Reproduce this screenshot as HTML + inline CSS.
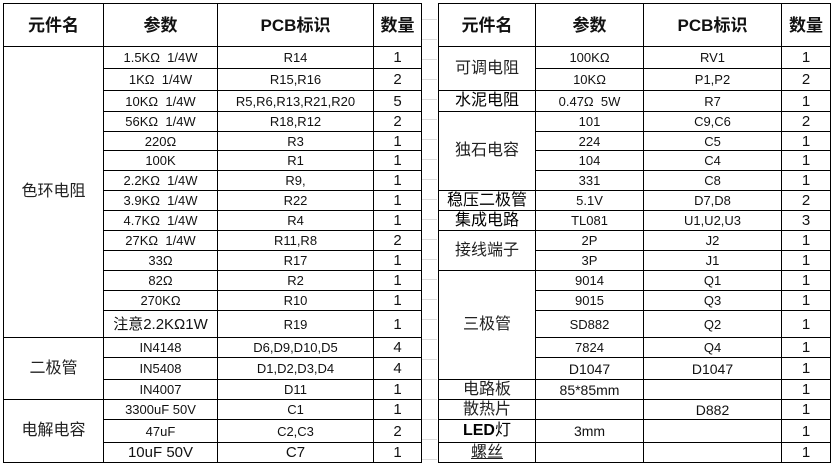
<!DOCTYPE html>
<html><head><meta charset="utf-8"><style>
body{margin:0;width:832px;height:465px;background:#fff;position:relative;overflow:hidden;font-family:"Liberation Sans","Noto Sans CJK SC",sans-serif;}
table{position:absolute;top:3px;border-collapse:collapse;table-layout:fixed;}
td{border:1px solid #000;padding:0;text-align:center;font-size:13px;color:#111;white-space:nowrap;overflow:hidden;line-height:1;}
tr.h td{font-size:17px;font-weight:bold;}
.big{font-size:16px;color:#222;}
.n{font-size:15px;}
.gap{position:absolute;top:0;left:421px;width:16px;height:465px;background:repeating-linear-gradient(#fff 0 19px,#dcdcdc 19px 20px);}
</style></head><body>
<div class="gap"></div>
<table style="left:3px;width:418px">
<colgroup><col style="width:100px"><col style="width:114px"><col style="width:156px"><col style="width:48px"></colgroup>
<tr class="h" style="height:43px"><td>元件名</td><td>参数</td><td>PCB标识</td><td>数量</td></tr>
<tr style="height:22px"><td rowspan="14" class="big">色环电阻</td><td>1.5KΩ&nbsp; 1/4W</td><td>R14</td><td class="n">1</td></tr>
<tr style="height:22px"><td>1KΩ&nbsp; 1/4W</td><td>R15,R16</td><td class="n">2</td></tr>
<tr style="height:21px"><td>10KΩ&nbsp; 1/4W</td><td>R5,R6,R13,R21,R20</td><td class="n">5</td></tr>
<tr style="height:20px"><td>56KΩ&nbsp; 1/4W</td><td>R18,R12</td><td class="n">2</td></tr>
<tr style="height:19px"><td>220Ω</td><td>R3</td><td class="n">1</td></tr>
<tr style="height:20px"><td>100K</td><td>R1</td><td class="n">1</td></tr>
<tr style="height:20px"><td>2.2KΩ&nbsp; 1/4W</td><td>R9,</td><td class="n">1</td></tr>
<tr style="height:20px"><td>3.9KΩ&nbsp; 1/4W</td><td>R22</td><td class="n">1</td></tr>
<tr style="height:20px"><td>4.7KΩ&nbsp; 1/4W</td><td>R4</td><td class="n">1</td></tr>
<tr style="height:20px"><td>27KΩ&nbsp; 1/4W</td><td>R11,R8</td><td class="n">2</td></tr>
<tr style="height:20px"><td>33Ω</td><td>R17</td><td class="n">1</td></tr>
<tr style="height:20px"><td>82Ω</td><td>R2</td><td class="n">1</td></tr>
<tr style="height:20px"><td>270KΩ</td><td>R10</td><td class="n">1</td></tr>
<tr style="height:27px"><td style="font-size:15px">注意2.2KΩ1W</td><td>R19</td><td class="n">1</td></tr>
<tr style="height:20px"><td rowspan="3" class="big">二极管</td><td>IN4148</td><td>D6,D9,D10,D5</td><td class="n">4</td></tr>
<tr style="height:22px"><td>IN5408</td><td>D1,D2,D3,D4</td><td class="n">4</td></tr>
<tr style="height:20px"><td>IN4007</td><td>D11</td><td class="n">1</td></tr>
<tr style="height:20px"><td rowspan="3" class="big">电解电容</td><td>3300uF 50V</td><td>C1</td><td class="n">1</td></tr>
<tr style="height:23px"><td>47uF</td><td>C2,C3</td><td class="n">2</td></tr>
<tr style="height:20px"><td style="font-size:15px">10uF 50V</td><td style="font-size:15px">C7</td><td class="n">1</td></tr>
</table>
<table style="left:438px;width:392px">
<colgroup><col style="width:97px"><col style="width:108px"><col style="width:138px"><col style="width:49px"></colgroup>
<tr class="h" style="height:43px"><td>元件名</td><td>参数</td><td>PCB标识</td><td>数量</td></tr>
<tr style="height:22px"><td rowspan="2" class="big">可调电阻</td><td>100KΩ</td><td>RV1</td><td class="n">1</td></tr>
<tr style="height:22px"><td>10KΩ</td><td>P1,P2</td><td class="n">2</td></tr>
<tr style="height:21px"><td class="big" style="color:#000">水泥电阻</td><td>0.47Ω&nbsp; 5W</td><td>R7</td><td class="n">1</td></tr>
<tr style="height:20px"><td rowspan="4" class="big">独石电容</td><td>101</td><td>C9,C6</td><td class="n">2</td></tr>
<tr style="height:19px"><td>224</td><td>C5</td><td class="n">1</td></tr>
<tr style="height:20px"><td>104</td><td>C4</td><td class="n">1</td></tr>
<tr style="height:20px"><td>331</td><td>C8</td><td class="n">1</td></tr>
<tr style="height:20px"><td class="big" style="color:#000">稳压二极管</td><td>5.1V</td><td>D7,D8</td><td class="n">2</td></tr>
<tr style="height:20px"><td class="big" style="color:#000">集成电路</td><td>TL081</td><td>U1,U2,U3</td><td class="n">3</td></tr>
<tr style="height:20px"><td rowspan="2" class="big">接线端子</td><td>2P</td><td>J2</td><td class="n">1</td></tr>
<tr style="height:20px"><td>3P</td><td>J1</td><td class="n">1</td></tr>
<tr style="height:20px"><td rowspan="5" class="big">三极管</td><td>9014</td><td>Q1</td><td class="n">1</td></tr>
<tr style="height:20px"><td>9015</td><td>Q3</td><td class="n">1</td></tr>
<tr style="height:27px"><td>SD882</td><td>Q2</td><td class="n">1</td></tr>
<tr style="height:20px"><td>7824</td><td>Q4</td><td class="n">1</td></tr>
<tr style="height:22px"><td style="font-size:14px">D1047</td><td style="font-size:14px">D1047</td><td class="n">1</td></tr>
<tr style="height:20px"><td class="big">电路板</td><td style="font-size:14px">85*85mm</td><td></td><td class="n">1</td></tr>
<tr style="height:20px"><td class="big">散热片</td><td></td><td style="font-size:14px">D882</td><td class="n">1</td></tr>
<tr style="height:23px"><td class="big" style="color:#000"><b>LED</b>灯</td><td style="font-size:14px">3mm</td><td></td><td class="n">1</td></tr>
<tr style="height:20px"><td class="big" style="text-decoration:underline">螺丝</td><td></td><td></td><td class="n">1</td></tr>
</table>
</body></html>
